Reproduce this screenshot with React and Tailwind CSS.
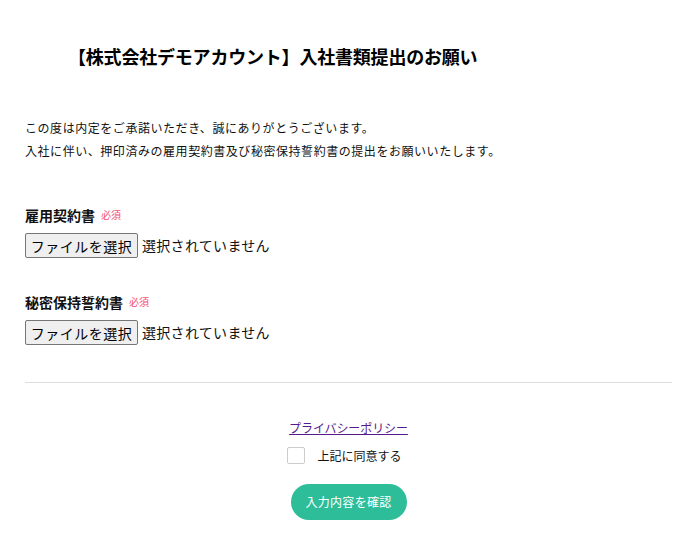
import React from 'react';

const jp = { fontFamily: '"Noto Sans CJK JP", "Noto Sans", sans-serif' };

function FileField({ label }) {
  return (
    <div>
      <div className="flex items-center leading-[20px]">
        <span className="text-[14px] font-bold text-[#111]">{label}</span>
        <span className="ml-[6px] text-[10px] text-[#f5506b]">必須</span>
      </div>
      <div className="mt-[8px] flex items-center">
        <button
          type="button"
          className="h-[25px] w-[113px] rounded-[2px] border border-[#767676] bg-[#efefef] text-[14px] leading-none tracking-[0.5px] text-black"
        >
          ファイルを選択
        </button>
        <span className="ml-[4px] text-[14px] tracking-[0.3px] text-[#111]">選択されていません</span>
      </div>
    </div>
  );
}

export default function App() {
  return (
    <div style={jp} className="min-h-screen w-full bg-white text-[#111]">
      <div className="pl-[25px] pr-[26px]">
        <h1 className="pt-[43px] pl-[43px] text-[18px] font-bold leading-[27px] tracking-[-0.2px] text-black">
          【株式会社デモアカウント】入社書類提出のお願い
        </h1>

        <div className="mt-[46px] text-[12px] leading-[23px] tracking-[0.55px]">
          <p>この度は内定をご承諾いただき、誠にありがとうございます。</p>
          <p>入社に伴い、押印済みの雇用契約書及び秘密保持誓約書の提出をお願いいたします。</p>
        </div>

        <div className="mt-[43px]">
          <FileField label="雇用契約書" />
        </div>
        <div className="mt-[34px]">
          <FileField label="秘密保持誓約書" />
        </div>

        <hr className="mt-[37px] border-t border-[#dddddd]" />

        <div className="mt-[36px] flex flex-col items-center">
          <a href="#" className="text-[12px] leading-[18px] tracking-[-0.1px] text-[#551a8b] underline">
            プライバシーポリシー
          </a>
          <label className="mt-[10px] flex items-center gap-[12px] pr-[8px]">
            <span className="block h-[17px] w-[18px] rounded-[2px] border border-[#cccccc] bg-white" />
            <span className="text-[12px] leading-[17px]">上記に同意する</span>
          </label>
          <button
            type="button"
            className="mt-[20px] h-[36px] w-[116px] rounded-full bg-[#2dbd99] text-[12px] tracking-[0.3px] text-white"
          >
            入力内容を確認
          </button>
        </div>
      </div>
    </div>
  );
}
